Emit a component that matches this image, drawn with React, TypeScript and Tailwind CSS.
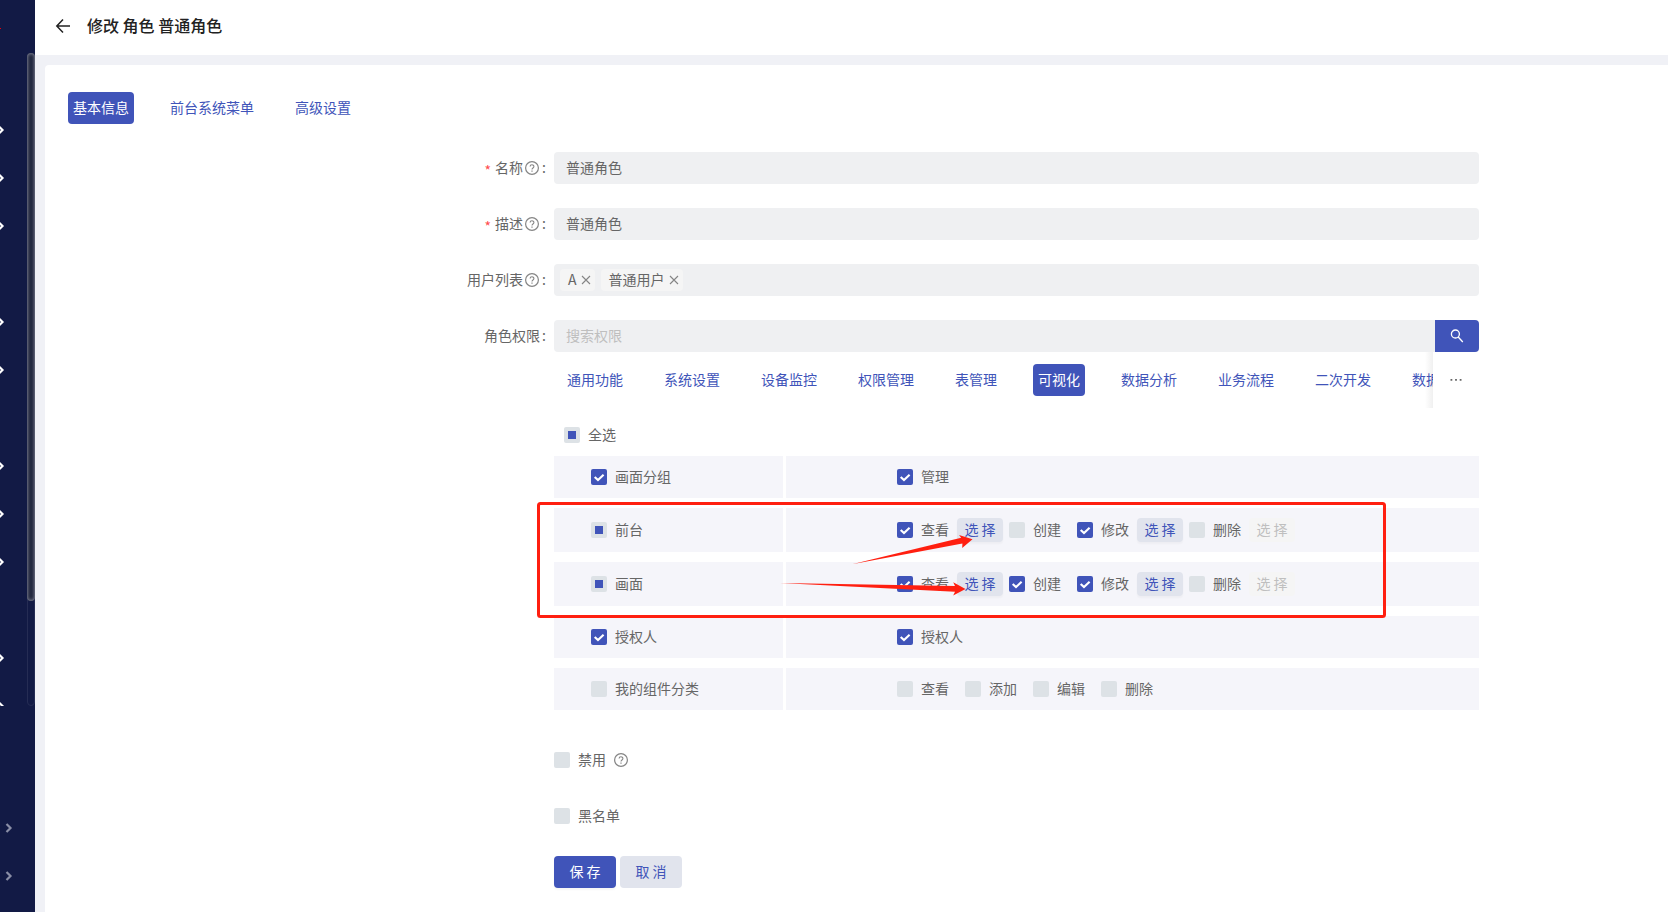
import { useState, type ReactNode } from "react";

type Check = "on" | "off" | "some";

interface Action {
  label: string;
  state: Check;
  select?: "enabled" | "disabled";
}

interface PermissionRow {
  label: string;
  state: Check;
  tall?: boolean;
  actions: Action[];
}

const pageTabs = ["基本信息", "前台系统菜单", "高级设置"];

const permissionTabs = [
  "通用功能",
  "系统设置",
  "设备监控",
  "权限管理",
  "表管理",
  "可视化",
  "数据分析",
  "业务流程",
  "二次开发",
  "数据",
];

const rows: PermissionRow[] = [
  { label: "画面分组", state: "on", actions: [{ label: "管理", state: "on" }] },
  {
    label: "前台",
    state: "some",
    tall: true,
    actions: [
      { label: "查看", state: "on", select: "enabled" },
      { label: "创建", state: "off" },
      { label: "修改", state: "on", select: "enabled" },
      { label: "删除", state: "off", select: "disabled" },
    ],
  },
  {
    label: "画面",
    state: "some",
    tall: true,
    actions: [
      { label: "查看", state: "on", select: "enabled" },
      { label: "创建", state: "on" },
      { label: "修改", state: "on", select: "enabled" },
      { label: "删除", state: "off", select: "disabled" },
    ],
  },
  { label: "授权人", state: "on", actions: [{ label: "授权人", state: "on" }] },
  {
    label: "我的组件分类",
    state: "off",
    actions: [
      { label: "查看", state: "off" },
      { label: "添加", state: "off" },
      { label: "编辑", state: "off" },
      { label: "删除", state: "off" },
    ],
  },
];

// which menu entries have a submenu
const menu = [false, true, true, true, false, true, true, false, true, true, true, false, true, true];

function Checkbox({ label, state, children }: { label: string; state: Check; children?: ReactNode }) {
  const [value, setValue] = useState<Check>(state);

  return (
    <label className="flex items-center whitespace-nowrap">
      <span className="relative flex h-4 w-4 shrink-0">
        <input
          type="checkbox"
          checked={value === "on"}
          onChange={() => setValue(value === "on" ? "off" : "on")}
          className="h-4 w-4 appearance-none rounded-xs bg-[#dde2e6] checked:bg-[#4054b9]"
        />
        {value === "some" && <span className="pointer-events-none absolute inset-1 bg-[#4054b9]" />}
        {value === "on" && (
          <svg viewBox="0 0 16 16" className="pointer-events-none absolute inset-0" fill="none" stroke="#fff" strokeWidth="2.1">
            <path d="M3.7 7.9 L7 11.1 L12.6 5.7" />
          </svg>
        )}
      </span>
      <span className="px-2 pb-0.5">{label}</span>
      {children}
    </label>
  );
}

function HelpIcon() {
  return (
    <svg viewBox="0 0 14 14" className="h-3.5 w-3.5 shrink-0" fill="none" stroke="#858585">
      <circle cx="7" cy="7" r="6.4" strokeWidth="1.2" />
      <path d="M5.1 5.6 C5.1 3.2 8.9 3.2 8.9 5.5 C8.9 7 7 6.9 7 8.5" strokeWidth="1.1" />
      <path d="M7 9.6 V10.8" strokeWidth="1.2" />
    </svg>
  );
}

function FormRow({ id, label, required, help, children }: { id: string; label: string; required?: boolean; help?: boolean; children: ReactNode }) {
  return (
    <div className="mb-6 grid grid-cols-[486fr_925fr_189fr]">
      <label htmlFor={id} className="flex h-8 items-center justify-end pr-2">
        {required && <span className="mr-1 pt-1 text-[#ff4d4f]">*</span>}
        <span className="pb-0.5">{label}</span>
        {help && (
          <span className="mr-px ml-0.5">
            <HelpIcon />
          </span>
        )}
        <span className="ml-0.5 pb-0.5">:</span>
      </label>
      <div className="min-w-0">{children}</div>
    </div>
  );
}

function Tab({ label, active, onClick }: { label: string; active: boolean; onClick: () => void }) {
  return (
    <button
      type="button"
      onClick={onClick}
      className={`h-8 shrink-0 rounded px-[5px] pb-0.5 ${active ? "bg-[#4054b9] text-white" : "text-[#4054b9]"}`}
    >
      {label}
    </button>
  );
}

function Chevron() {
  return (
    <svg viewBox="0 0 8 10" className="h-2.5 w-2" fill="none" stroke="currentColor" strokeWidth="2.2">
      <path d="M1.5 1 L5.5 5 L1.5 9" />
    </svg>
  );
}

function Sidebar() {
  return (
    <aside className="flex w-[35px] shrink-0 flex-col bg-[#121a45]">
      <div className="h-[53px] pt-7">
        <div className="h-px w-px bg-red-600" />
      </div>
      <div className="flex h-[653px] justify-between overflow-hidden">
        <nav className="-ml-[3px] pt-[5px] text-white">
          {menu.map((sub, i) => (
            <div key={i} className="flex h-12 items-center">
              {sub && <Chevron />}
            </div>
          ))}
        </nav>
        <div className="w-2 rounded-full border border-[#252c54]">
          <div className="-mx-px -mt-px h-[548px] rounded-full bg-[#22283f] shadow-[inset_0_0_3px_1px_#74788a]" />
        </div>
      </div>
      <div className="pt-[98px] text-[#8a8ea6]">
        <div className="flex h-12 items-center pl-[5px]">
          <Chevron />
        </div>
        <div className="flex h-12 items-center pl-[5px]">
          <Chevron />
        </div>
      </div>
    </aside>
  );
}

function UserTag({ name }: { name: string }) {
  return (
    <span className="flex h-[22px] items-center gap-1 rounded bg-[#f5f5f5] pr-1 pl-2">
      <span className="pb-0.5">{name}</span>
      <button type="button" aria-label={name}>
        <svg viewBox="0 0 10 10" className="h-2.5 w-2.5" fill="none" stroke="#858585" strokeWidth="1.1">
          <path d="M1 1 L9 9 M9 1 L1 9" />
        </svg>
      </button>
    </span>
  );
}

function SelectButton({ disabled }: { disabled: boolean }) {
  return (
    <button
      type="button"
      disabled={disabled}
      className="h-6 w-[46px] rounded bg-[#e1e4ed] pb-0.5 text-[#4054b9] shadow-[0_2px_2px_rgba(0,0,0,0.03)] disabled:bg-[#f5f5f5] disabled:text-[#bfbfbf] disabled:shadow-none"
    >
      选 择
    </button>
  );
}

function Highlight() {
  return (
    <svg viewBox="0 0 850 116" className="pointer-events-none absolute top-[46px] -left-[17px] h-[116px] w-[850px]" fill="#ff1f10">
      <rect x="1.5" y="1.5" width="846" height="113" rx="2" fill="none" stroke="#ff1f10" strokeWidth="3" />
      <path d="M315 62.3 L424.2 35.8 L422 33 L435.5 37.2 L425.2 46 L425.4 41.6 Z" />
      <path d="M243 81 L418 84 L416.2 80.3 L428.5 87 L416.2 93.5 L418 89.8 Z" />
    </svg>
  );
}

export default function App() {
  const [pageTab, setPageTab] = useState("基本信息");
  const [permissionTab, setPermissionTab] = useState("可视化");

  return (
    <div className="flex min-h-screen bg-[#f0f1f6] font-['Noto_Sans_CJK_SC',sans-serif] text-sm text-[#666]">
      <Sidebar />
      <div className="flex min-w-0 flex-1 flex-col">
        <header className="flex h-[55px] items-center bg-white pb-1 pl-5">
          <button type="button" aria-label="返回" className="mr-4 text-[#222]">
            <svg viewBox="0 0 16 16" className="h-4 w-4" fill="none" stroke="currentColor" strokeWidth="1.5">
              <path d="M15 8 H2 M8 1.5 L1.8 8 L8 14.5" />
            </svg>
          </button>
          <h1 className="pb-0.5 text-base font-medium text-[#222]">修改 角色 普通角色</h1>
        </header>

        <main className="mt-2.5 ml-2.5 flex-1 rounded-tl bg-white pt-[27px] pl-[23px]">
          <div className="mb-7 flex gap-[31px]">
            {pageTabs.map((tab) => (
              <Tab key={tab} label={tab} active={tab === pageTab} onClick={() => setPageTab(tab)} />
            ))}
          </div>

          <FormRow id="name" label="名称" required help>
            <input id="name" defaultValue="普通角色" className="block h-8 w-full rounded bg-[#eff0f2] px-3 pb-0.5" />
          </FormRow>
          <FormRow id="desc" label="描述" required help>
            <input id="desc" defaultValue="普通角色" className="block h-8 w-full rounded bg-[#eff0f2] px-3 pb-0.5" />
          </FormRow>
          <FormRow id="users" label="用户列表" help>
            <div className="flex h-8 items-center gap-1.5 rounded bg-[#eff0f2] px-1.5">
              <UserTag name="A" />
              <UserTag name="普通用户" />
              <input id="users" className="h-full min-w-0 flex-1 outline-none" />
            </div>
          </FormRow>
          <FormRow id="search" label="角色权限">
            <div className="flex h-8">
              <input
                id="search"
                placeholder="搜索权限"
                className="min-w-0 flex-1 rounded-l bg-[#eff0f2] px-3 pb-0.5 placeholder:text-[#bfbfbf]"
              />
              <button type="button" aria-label="搜索" className="flex w-11 items-center justify-center rounded-r bg-[#4054b9] text-white">
                <svg viewBox="0 0 14 14" className="h-3.5 w-3.5" fill="none" stroke="currentColor" strokeWidth="1.3">
                  <circle cx="5.4" cy="5" r="4" />
                  <path d="M8.2 8 L12.8 13" />
                </svg>
              </button>
            </div>

            <div className="flex h-14">
              <div className="relative flex min-w-0 flex-1 items-center gap-[31px] overflow-hidden pl-2">
                {permissionTabs.map((tab) => (
                  <Tab key={tab} label={tab} active={tab === permissionTab} onClick={() => setPermissionTab(tab)} />
                ))}
                <div className="pointer-events-none absolute inset-y-0 right-0 w-2 bg-linear-to-l from-black/6 to-transparent" />
              </div>
              <button type="button" aria-label="更多" className="flex w-[46px] items-center justify-center">
                <svg viewBox="0 0 12 2" className="h-0.5 w-3" fill="#666">
                  <path d="M0.5 0h1.8v1.8H0.5z M5.1 0h1.8v1.8H5.1z M9.7 0h1.8v1.8H9.7z" />
                </svg>
              </button>
            </div>

            <div className="flex h-12 items-end pb-2.5 pl-2.5">
              <Checkbox label="全选" state="some" />
            </div>

            <div className="relative flex flex-col gap-2.5">
              {rows.map((row) => (
                <div key={row.label} className={`grid grid-cols-[229fr_693fr] gap-[3px] ${row.tall ? "h-11" : "h-[42px]"}`}>
                  <div className="flex items-center bg-[#f5f5fa] pl-[37px]">
                    <Checkbox label={row.label} state={row.state} />
                  </div>
                  <div className="flex items-center bg-[#f5f5fa] pl-[111px]">
                    {row.actions.map((action) => (
                      <div key={action.label} className={`flex items-center ${action.select ? "mr-1.5" : "mr-2"}`}>
                        <Checkbox label={action.label} state={action.state} />
                        {action.select && <SelectButton disabled={action.select === "disabled"} />}
                      </div>
                    ))}
                  </div>
                </div>
              ))}
              <Highlight />
            </div>

            <div className="mt-[34px] flex h-8 items-center">
              <Checkbox label="禁用" state="off">
                <HelpIcon />
              </Checkbox>
            </div>
            <div className="mt-6 flex h-8 items-center">
              <Checkbox label="黑名单" state="off" />
            </div>
            <div className="mt-6 flex gap-1">
              <button type="button" className="h-8 w-[62px] rounded bg-[#4054b9] pb-0.5 text-white shadow-[0_2px_2px_rgba(0,0,0,0.04)]">
                保 存
              </button>
              <button type="button" className="h-8 w-[62px] rounded bg-[#e1e4ed] pb-0.5 text-[#4054b9]">
                取 消
              </button>
            </div>
          </FormRow>
        </main>
      </div>
    </div>
  );
}
